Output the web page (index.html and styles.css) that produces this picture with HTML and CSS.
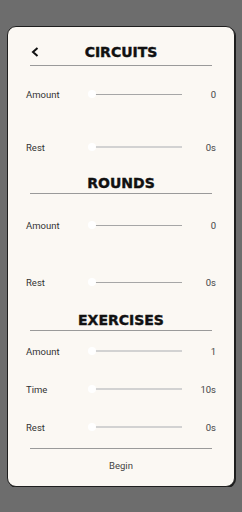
FILE: index.html
```html
<!DOCTYPE html>
<html lang="en">
<head>
    <meta charset="UTF-8">
    <meta name="viewport" content="width=device-width, initial-scale=1.0">
    <title>Workout Setup</title>
    <link rel="stylesheet" href="styles.css">
</head>
<body>
    <div class="card">
        <!-- Circuits -->
        <div class="head head-top">
            <span class="back">
                <svg width="8" height="10" viewBox="0 0 8 10"><path d="M6.5 1 L2 5 L6.5 9" fill="none" stroke="#111" stroke-width="2"/></svg>
            </span>
            <h1>CIRCUITS</h1>
        </div>
        <div class="rule"></div>
        <div class="row r-c1">
            <span class="label">Amount</span>
            <div class="slider"><div class="track"></div><div class="thumb"></div></div>
            <span class="value">0</span>
        </div>
        <div class="row r-c2">
            <span class="label">Rest</span>
            <div class="slider"><div class="track light"></div><div class="thumb"></div></div>
            <span class="value">0s</span>
        </div>

        <!-- Rounds -->
        <div class="head head-rounds"><h1>ROUNDS</h1></div>
        <div class="rule"></div>
        <div class="row r-r1">
            <span class="label">Amount</span>
            <div class="slider"><div class="track"></div><div class="thumb"></div></div>
            <span class="value">0</span>
        </div>
        <div class="row r-r2">
            <span class="label">Rest</span>
            <div class="slider"><div class="track"></div><div class="thumb"></div></div>
            <span class="value">0s</span>
        </div>

        <!-- Exercises -->
        <div class="head head-ex"><h1>EXERCISES</h1></div>
        <div class="rule"></div>
        <div class="row r-e1">
            <span class="label">Amount</span>
            <div class="slider"><div class="track light"></div><div class="thumb"></div></div>
            <span class="value">1</span>
        </div>
        <div class="row r-e2">
            <span class="label">Time</span>
            <div class="slider"><div class="track light"></div><div class="thumb"></div></div>
            <span class="value">10s</span>
        </div>
        <div class="row r-e3">
            <span class="label">Rest</span>
            <div class="slider"><div class="track light"></div><div class="thumb"></div></div>
            <span class="value">0s</span>
        </div>

        <div class="rule r-end"></div>
        <div class="begin">Begin</div>
    </div>
</body>
</html>
```

FILE: styles.css
```css
* {
    margin: 0;
    padding: 0;
    box-sizing: border-box;
}

body {
    background: #6d6d6d;
    font-family: Roboto, "Liberation Sans", Arial, sans-serif;
    color: #333;
}

.card {
    margin: 26px 7px 0 7px;
    height: 461px;
    background: #fbf8f3;
    border: 1px solid #1e1e1e;
    border-radius: 9px;
    box-shadow: 1px 1px 0 #1e1e1e;
    padding: 0 18px;
}

/* section headings */
.head {
    display: grid;
    grid-template-columns: 1fr auto 1fr;
    align-items: center;
    height: 20px;
    padding: 0 4px;
}

.head h1 {
    grid-column: 2;
    font-family: "DejaVu Sans", sans-serif;
    font-weight: bold;
    font-size: 14px;
    line-height: 20px;
    color: #111;
    -webkit-text-stroke: 0.4px #111;
}

.back {
    grid-column: 1;
    grid-row: 1;
    display: flex;
    align-items: center;
    justify-self: start;
    margin-left: 1px;
}

.head-top { margin-top: 15px; margin-bottom: 3px; }
.head-rounds { margin-top: 16px; margin-bottom: 0; }
.head-ex { margin-top: 18px; margin-bottom: 0; }

.rule {
    height: 1px;
    background: #9a9a9a;
    margin: 0 4px;
}

/* setting rows */
.row {
    display: grid;
    grid-template-columns: 62px 1fr 30px;
    align-items: center;
    height: 20px;
    font-size: 9.5px;
}

.r-c1 { margin-top: 18px; }
.r-c2 { margin-top: 33px; }
.r-r1 { margin-top: 21px; }
.r-r2 { margin-top: 37px; }
.r-e1 { margin-top: 10px; }
.r-e2 { margin-top: 18px; }
.r-e3 { margin-top: 18px; }

.label {
    color: #333;
}

.value {
    text-align: right;
    color: #444;
}

.slider {
    position: relative;
    height: 8px;
    display: flex;
    align-items: center;
}

.track {
    height: 1px;
    background: #a6a6a6;
    margin: 0 4px;
    flex: 1;
}

.track.light {
    height: 2px;
    background: #d2d2d2;
}

.thumb {
    position: absolute;
    left: 0;
    top: 0;
    width: 8px;
    height: 8px;
    border-radius: 50%;
    background: #fff;
}

.r-end { margin-top: 11px; }

.begin {
    margin-top: 7px;
    height: 20px;
    line-height: 20px;
    text-align: center;
    font-size: 9.5px;
    color: #444;
}
```
